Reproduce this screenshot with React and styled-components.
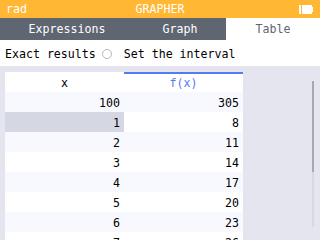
import React from 'react';
import styled, { createGlobalStyle } from 'styled-components';

const GlobalStyle = createGlobalStyle`
  html, body {
    margin: 0;
    padding: 0;
    background: #e4e5ee;
  }
  body {
    font-family: "DejaVu Sans Mono", "Liberation Mono", monospace;
  }
`;

const Screen = styled.div`
  width: 320px;
  height: 240px;
  overflow: hidden;
  display: flex;
  flex-direction: column;
  background: #e4e5ee;
  font-size: 11.6px;
`;

const Header = styled.div`
  height: 18px;
  flex: none;
  background: #ffb734;
  color: #fff;
  display: grid;
  grid-template-columns: 1fr auto 1fr;
  align-items: center;
  padding: 0 6px;
`;

const HeaderTitle = styled.span`
  text-align: center;
`;

const Battery = styled.svg`
  justify-self: end;
  display: block;
`;

const Tabs = styled.div`
  height: 22px;
  flex: none;
  display: grid;
  grid-template-columns: 134px 92px 94px;
  background: #5f6571;
`;

const Tab = styled.div`
  display: flex;
  align-items: center;
  justify-content: center;
  color: ${({ active }) => (active ? '#5f6571' : '#fff')};
  background: ${({ active }) => (active ? '#fff' : 'transparent')};
`;

const Options = styled.div`
  height: 25px;
  flex: none;
  background: #fff;
  display: flex;
  align-items: center;
  padding: 1px 6px 0 5px;
  color: #000;
`;

const Radio = styled.span`
  flex: none;
  width: 8px;
  height: 8px;
  border: 1px solid #b8b8bc;
  border-radius: 50%;
  margin: 0 12px 0 6px;
`;

const Body = styled.div`
  flex: 1;
  display: flex;
  padding: 6px 0 0 5px;
  min-height: 0;
`;

const Table = styled.div`
  width: 238px;
  display: grid;
  grid-template-columns: 119px 119px;
  grid-auto-rows: 20px;
  align-content: start;
`;

const HeadCell = styled.div`
  background: #fff;
  display: flex;
  align-items: center;
  justify-content: center;
  color: ${({ color }) => color || '#000'};
  border-top: 2px solid ${({ color }) => color || '#fff'};
  padding-bottom: 1px;
`;

const Cell = styled.div`
  display: flex;
  align-items: center;
  justify-content: flex-end;
  padding: 1px 4px 0 0;
  color: #000;
  background: ${({ selected, odd }) => (selected ? '#d5d7e2' : odd ? '#f7f9fe' : '#fff')};
`;

const ScrollBar = styled.div`
  margin: 9px 6px 0 auto;
  width: 2px;
  height: 146px;
  background: #d8d8e0;
  display: flex;
  flex-direction: column;
`;

const Thumb = styled.div`
  height: 91px;
  background: #a8a8ae;
`;

const rows = [
  [100, 305],
  [1, 8],
  [2, 11],
  [3, 14],
  [4, 17],
  [5, 20],
  [6, 23],
  [7, 26],
];

export default function App() {
  return (
    <Screen>
      <GlobalStyle />
      <Header>
        <span>rad</span>
        <HeaderTitle>GRAPHER</HeaderTitle>
        <Battery width="15" height="9" viewBox="0 0 15 9">
          <rect x="0" y="0" width="2" height="9" fill="#fff" />
          <rect x="3" y="0" width="10" height="9" fill="#fff" />
          <rect x="13" y="2" width="1" height="5" fill="#fff" />
        </Battery>
      </Header>
      <Tabs>
        <Tab>Expressions</Tab>
        <Tab>Graph</Tab>
        <Tab active>Table</Tab>
      </Tabs>
      <Options>
        Exact results
        <Radio />
        Set the interval
      </Options>
      <Body>
        <Table>
          <HeadCell>x</HeadCell>
          <HeadCell color="#5879f0">f(x)</HeadCell>
          {rows.map(([x, y], i) => (
            <React.Fragment key={x}>
              <Cell odd={i % 2 === 0} selected={i === 1}>{x}</Cell>
              <Cell odd={i % 2 === 0}>{y}</Cell>
            </React.Fragment>
          ))}
        </Table>
        <ScrollBar>
          <Thumb />
        </ScrollBar>
      </Body>
    </Screen>
  );
}
